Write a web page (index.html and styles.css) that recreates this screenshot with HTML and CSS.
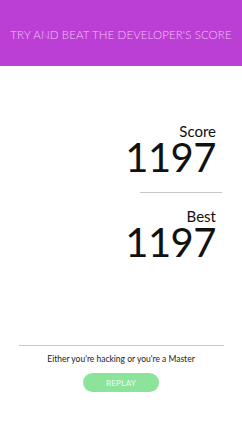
FILE: index.html
```html
<!DOCTYPE html>
<html lang="en">
<head>
    <meta charset="UTF-8">
    <meta name="viewport" content="width=device-width, initial-scale=1.0">
    <title>Game Over</title>
    <link rel="stylesheet" href="styles.css">
</head>
<body>
    <div class="screen">
        <header class="top-bar">
            <h1>TRY AND BEAT THE DEVELOPER'S SCORE</h1>
        </header>

        <div class="scores">
            <div class="score-block">
                <div class="label">Score</div>
                <div class="value">1197</div>
            </div>
            <div class="divider"></div>
            <div class="score-block">
                <div class="label">Best</div>
                <div class="value">1197</div>
            </div>
        </div>

        <div class="footer">
            <div class="footer-line"></div>
            <p class="message">Either you're hacking or you're a Master</p>
            <button class="replay-btn">REPLAY</button>
        </div>
    </div>
</body>
</html>
```

FILE: styles.css
```css
* {
    margin: 0;
    padding: 0;
    box-sizing: border-box;
    font-family: 'Lato', 'Open Sans', sans-serif;
}
body {
    background-color: white;
}
.screen {
    width: 242px;
    height: 430px;
    display: flex;
    flex-direction: column;
}
.top-bar {
    height: 66px;
    background-color: #bc3fd5;
    display: flex;
    align-items: center;
    justify-content: center;
}
.top-bar h1 {
    color: #f2c2f6;
    font-size: 11.5px;
    font-weight: 300;
    letter-spacing: 0.1px;
    margin-top: 2px;
}
.scores {
    display: flex;
    flex-direction: column;
    align-items: flex-end;
    padding-right: 20px;
    margin-top: 58px;
}
.score-block {
    text-align: right;
    padding-right: 6px;
}
.label {
    font-size: 15px;
    line-height: 15px;
    color: #111;
}
.value {
    font-size: 40px;
    line-height: 32px;
    margin-top: 2px;
    color: #111;
    letter-spacing: -0.5px;
}
.divider {
    width: 82px;
    height: 1px;
    background-color: #c8c8c8;
    margin: 19px 0 16px;
}
.footer {
    margin-top: auto;
    margin-bottom: 38px;
    display: flex;
    flex-direction: column;
    align-items: center;
}
.footer-line {
    width: 205px;
    height: 1px;
    background-color: #c8c8c8;
    margin-left: 1px;
}
.message {
    font-size: 8.5px;
    color: #222;
    margin-top: 8px;
}
.replay-btn {
    margin-top: 9px;
    width: 76px;
    height: 19px;
    border: none;
    border-radius: 10px;
    background-color: #8ce49b;
    color: #f2fcf1;
    font-size: 8px;
    letter-spacing: 0.3px;
}
```
